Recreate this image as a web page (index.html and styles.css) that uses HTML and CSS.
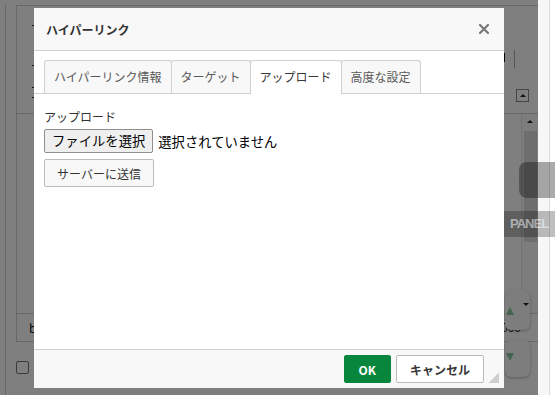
FILE: index.html
```html
<!DOCTYPE html>
<html lang="ja">
<head>
  <meta charset="UTF-8" />
  <meta name="viewport" content="width=device-width, initial-scale=1.0"/>
  <title>ハイパーリンク</title>
  <link rel="stylesheet" href="styles.css">
</head>
<body>
  <div class="page">
    <div class="frame">
      <div class="editor">
        <div class="toolbar">
          <div class="ticks">
            <span class="tick t1"></span>
            <span class="tick t2"></span>
            <span class="tick t3"></span>
            <span class="tick t4"></span>
          </div>
          <div class="tb-right">
            <div class="tb-group">
              <span class="tb-glyph"></span>
              <span class="tb-sep"></span>
            </div>
            <span class="tb-btn"><span class="tri-up small"></span></span>
          </div>
        </div>
        <div class="doc-area">
          <div class="doc"></div>
          <div class="vscroll">
            <span class="tri-up small"></span>
            <span class="thumb"></span>
          </div>
        </div>
        <div class="status">
          <span>b</span>
          <span class="status-num">000</span>
        </div>
      </div>
      <span class="checkbox"></span>
    </div>

    <!-- floating spinner on the page -->
    <div class="spin spin-up">
      <span class="tri-up green"></span>
      <span class="spin-caret"></span>
    </div>
    <div class="spin spin-down">
      <span class="tri-down green"></span>
    </div>
  </div>
  <div class="page-scrollbar"></div>

  <div class="overlay"></div>
  <div class="float-pill"></div>
  <div class="float-panel">PANEL</div>

  <div class="dialog">
    <div class="dlg-head">
      <span class="dlg-title">ハイパーリンク</span>
      <svg class="dlg-close" width="10" height="10" viewBox="0 0 10 10">
        <path d="M1 1 L9 9 M9 1 L1 9" stroke="#777" stroke-width="2.2" stroke-linecap="square"/>
      </svg>
    </div>
    <div class="tabs">
      <span class="tab">ハイパーリンク情報</span>
      <span class="tab">ターゲット</span>
      <span class="tab active">アップロード</span>
      <span class="tab">高度な設定</span>
    </div>
    <div class="dlg-body">
      <div class="field-label">アップロード</div>
      <div class="file-row">
        <span class="file-btn">ファイルを選択</span>
        <span class="file-name">選択されていません</span>
      </div>
      <button class="send-btn">サーバーに送信</button>
    </div>
    <div class="dlg-foot">
      <button class="btn btn-ok">OK</button>
      <button class="btn btn-cancel">キャンセル</button>
      <span class="grip"></span>
    </div>
  </div>
</body>
</html>
```

FILE: styles.css
```css
* {
  box-sizing: border-box;
}
html, body {
  margin: 0;
}
body {
  width: 555px;
  height: 395px;
  overflow: hidden;
  display: flex;
  position: relative;
  background: #fff;
  font-family: "Noto Sans CJK JP", "Noto Sans", sans-serif;
}

/* page behind the dialog */
.page {
  width: 538px;
  height: 395px;
  padding: 5px 0 0 5px;
  position: relative;
}
.frame {
  height: 100%;
  border-left: 1px solid #d0d0d0;
  padding-left: 10px;
}
.editor {
  height: 337px;
  border: 1px solid #d0d0d0;
  border-right: 0;
  display: flex;
  flex-direction: column;
}
.toolbar {
  height: 108px;
  border-bottom: 1px solid #d0d0d0;
  display: flex;
  justify-content: space-between;
  padding: 0 9px 0 15px;
}
.ticks {
  display: flex;
  flex-direction: column;
}
.tick {
  width: 3px;
  height: 1px;
  background: #222;
}
.t1 { margin-top: 19px; }
.t2 { margin-top: 39px; }
.t3 { margin-top: 21px; }
.t4 { margin-top: 9px; }
.tb-right {
  display: flex;
  flex-direction: column;
  align-items: flex-end;
  padding-top: 44px;
}
.tb-group {
  display: flex;
  align-items: center;
  gap: 9px;
  margin-right: 14px;
  height: 18px;
}
.tb-glyph {
  width: 2px;
  height: 9px;
  background: #111;
  margin-top: -4px;
}
.tb-sep {
  width: 1px;
  height: 18px;
  background: #aaa;
}
.tb-btn {
  width: 13px;
  height: 13px;
  margin-top: 21px;
  border: 1px solid #8a8a8a;
  display: flex;
  align-items: center;
  justify-content: center;
}
.tri-up {
  width: 0;
  height: 0;
  border-left: 4px solid transparent;
  border-right: 4px solid transparent;
  border-bottom: 4px solid #222;
}
.tri-up.small {
  border-left-width: 3px;
  border-right-width: 3px;
  border-bottom-width: 3px;
}
.tri-down {
  width: 0;
  height: 0;
  border-left: 4.5px solid transparent;
  border-right: 4.5px solid transparent;
  border-top: 8px solid #86c89e;
}
.tri-up.green {
  border-left-width: 4.5px;
  border-right-width: 4.5px;
  border-bottom: 8px solid #86c89e;
}
.doc-area {
  height: 199px;
  display: flex;
}
.doc {
  flex: 1;
}
.vscroll {
  width: 17px;
  border-left: 1px solid #e4e4e4;
  background: #fbfbfb;
  display: flex;
  flex-direction: column;
  align-items: center;
  padding-top: 6px;
}
.thumb {
  width: 13px;
  height: 111px;
  margin-top: 8px;
  background: #dcdcdc;
}
.status {
  height: 28px;
  border-top: 1px solid #d0d0d0;
  display: flex;
  align-items: center;
  justify-content: space-between;
  padding: 0 17px 0 12px;
  font-size: 12px;
  color: #111;
}
.status-num {
  font-family: "Liberation Sans", sans-serif;
}
.checkbox {
  display: block;
  width: 13px;
  height: 13px;
  margin-top: 19px;
  border: 1px solid #777;
  border-radius: 2px;
}
.spin {
  position: absolute;
  left: 505px;
  width: 25px;
  border-radius: 6px;
  background: #fafafa;
  box-shadow: 0 1px 3px rgba(0, 0, 0, 0.3);
  display: flex;
  padding-left: 1px;
}
.spin-up {
  top: 290px;
  height: 40px;
  align-items: center;
  padding-top: 2px;
}
.spin-caret {
  position: absolute;
  right: 1px;
  top: 13px;
  border-left: 3px solid transparent;
  border-right: 3px solid transparent;
  border-top: 3px solid #222;
}
.spin-down {
  top: 340px;
  height: 37px;
  align-items: center;
  padding-bottom: 4px;
}
.page-scrollbar {
  width: 17px;
  height: 395px;
  background: linear-gradient(to right, #f7f7f7 0 11px, #dadada 11px 12px, #fff 12px);
}

/* modal layer */
.overlay {
  position: absolute;
  left: 0;
  top: 0;
  width: 538px;
  height: 395px;
  background: rgba(0, 0, 0, 0.5);
}
.float-pill {
  position: absolute;
  left: 519px;
  top: 162px;
  width: 50px;
  height: 36px;
  border-radius: 8px;
  background: rgba(0, 0, 0, 0.33);
}
.float-panel {
  position: absolute;
  left: 504px;
  top: 211px;
  width: 51px;
  height: 26px;
  padding-left: 6px;
  background: rgba(0, 0, 0, 0.25);
  color: rgba(255, 255, 255, 0.5);
  font: bold 13px/26px "Liberation Sans", sans-serif;
  letter-spacing: -1px;
}

/* dialog */
.dialog {
  position: absolute;
  left: 34px;
  top: 8px;
  width: 470px;
  height: 380px;
  background: #fff;
  display: flex;
  flex-direction: column;
}
.dlg-head {
  height: 43px;
  flex-shrink: 0;
  background: #f8f8f8;
  border-bottom: 1px solid #d1d1d1;
  display: flex;
  align-items: center;
  justify-content: space-between;
  padding: 0 15px 0 12px;
}
.dlg-title {
  font-size: 12px;
  font-weight: bold;
  color: #333;
}
.tabs {
  flex-shrink: 0;
  display: flex;
  align-items: flex-end;
  padding: 9px 0 0 10px;
  border-bottom: 1px solid #d1d1d1;
}
.tab {
  height: 33px;
  padding: 0 9px;
  margin-right: -1px;
  border: 1px solid #d1d1d1;
  border-bottom: 0;
  border-radius: 3px 3px 0 0;
  background: #f8f8f8;
  font-size: 12px;
  line-height: 32px;
  color: #595959;
}
.tab.active {
  height: 34px;
  margin-bottom: -1px;
  background: #fff;
  color: #383838;
  position: relative;
}
.dlg-body {
  flex: 1;
  padding: 15px 10px 0;
  display: flex;
  flex-direction: column;
  align-items: flex-start;
}
.field-label {
  font-size: 12px;
  line-height: 16px;
  color: #333;
  margin-bottom: 4px;
}
.file-row {
  display: flex;
  align-items: center;
  height: 24px;
}
.file-btn {
  height: 24px;
  padding: 0 7px;
  border: 1px solid #8f8f8f;
  border-radius: 2px;
  background: #efefef;
  font-size: 13.33px;
  line-height: 22px;
  color: #000;
}
.file-name {
  margin-left: 5px;
  font-size: 13.33px;
  color: #000;
}
.send-btn {
  margin-top: 6px;
  height: 28px;
  padding: 0 12px;
  border: 1px solid #bcbcbc;
  border-radius: 2px;
  background: #f8f8f8;
  font-family: inherit;
  font-size: 12px;
  color: #333;
}
.dlg-foot {
  height: 39px;
  flex-shrink: 0;
  background: #f8f8f8;
  border-top: 1px solid #d1d1d1;
  display: flex;
  justify-content: flex-end;
  align-items: flex-start;
  gap: 5px;
  padding: 5px 20px 0 0;
  position: relative;
}
.btn {
  height: 28px;
  border-radius: 2px;
  font-family: inherit;
  font-size: 12px;
  font-weight: bold;
}
.btn-ok {
  padding: 0 14px;
  border: 1px solid #09863e;
  background: #09863e;
  color: #fff;
}
.btn-cancel {
  padding: 0 13px;
  border: 1px solid #bcbcbc;
  background: #fff;
  color: #383838;
}
.grip {
  position: absolute;
  right: 5px;
  bottom: 5px;
  width: 10px;
  height: 10px;
  background: linear-gradient(135deg, transparent 50%, #cfcfcf 50%);
}
```
